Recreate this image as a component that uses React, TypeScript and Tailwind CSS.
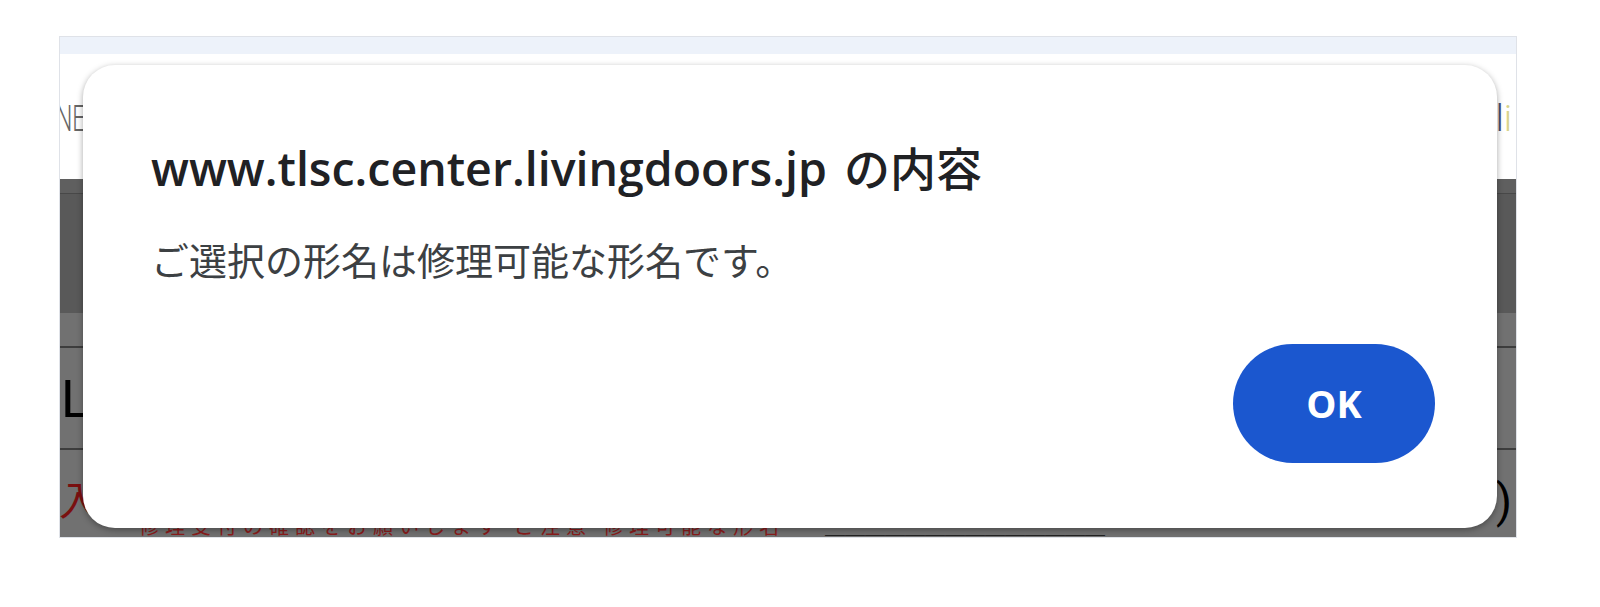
const uiFont = { fontFamily: '"Open Sans", "Noto Sans CJK JP", sans-serif' };
const pageFont = { fontFamily: 'Roboto, "Noto Sans CJK JP", sans-serif' };

function PageBehind() {
  return (
    <div className="flex h-full flex-col" style={pageFont}>
      <div className="h-[18px] bg-[#edf2fa]" />
      <div className="flex h-[129px] items-center justify-between bg-white pt-[4px]">
        <span className="-ml-[47px] origin-right scale-x-[0.62] text-[37px] font-light leading-none text-[#666]">ONE</span>
        <span className="mr-[4px] text-[37px] font-light leading-none text-[#4a4f70]">
          l<span className="text-[#d8d48a]">i</span>
        </span>
      </div>
      <div className="h-[14px] bg-[#5f5f5f]" />
      <div className="h-[2px] bg-[#484848]" />
      <div className="h-[123px] bg-[#595959]" />
      <div className="h-[34px] bg-[#717171]" />
      <div className="h-[2px] bg-[#3d3d3d]" />
      <div className="flex h-[103px] items-start bg-[#717171] pl-[1px] pt-[24px]">
        <span className="text-[53px] leading-none text-black" style={{ fontFamily: '"Liberation Sans", sans-serif' }}>
          L
        </span>
      </div>
      <div className="h-[2px] bg-[#3d3d3d]" />
      <div className="flex flex-1 items-start justify-between bg-[#717171] pt-[32px]">
        <div className="flex items-start gap-[40px]">
          <span className="-ml-[1px] text-[40px] leading-none text-[#7a1010]">入</span>
          <span className="mt-[35px] text-[20px] leading-none tracking-[6px] text-[#8a1c1c]">
            修理受付の確認をお願いします ご注意 修理可能な形名
          </span>
          <span className="mt-[35px] text-[20px] font-bold leading-none text-[#222]">
            ＿＿＿＿＿＿＿＿＿＿＿＿＿＿
          </span>
        </div>
        <span className="-mt-[4px] mr-[4px] text-[46px] leading-none text-black">)</span>
      </div>
    </div>
  );
}

function AlertDialog() {
  return (
    <div
      className="absolute left-[23px] top-[28px] flex h-[463px] w-[1414px] flex-col rounded-[32px] bg-white pb-[65px] pl-[68px] pr-[62px] pt-[80px] shadow-[0_2px_6px_rgba(0,0,0,0.35)]"
      style={uiFont}
    >
      <h1 className="text-[46.5px] font-semibold leading-none text-[#202124]">
        www.tlsc.center.livingdoors.jp{' '}
        <span className="ml-[5px] text-[46px] font-medium">の内容</span>
      </h1>
      <p className="mt-[49px] text-[38px] leading-none text-[#3c4043]">
        ご選択の形名は修理可能な形名です。
      </p>
      <div className="mt-auto flex justify-end">
        <button
          type="button"
          className="flex h-[119px] w-[202px] items-center justify-center rounded-full bg-[#1b57cf] text-[38px] font-bold text-white"
        >
          OK
        </button>
      </div>
    </div>
  );
}

export default function App() {
  return (
    <div className="h-[607px] w-[1600px] bg-white pl-[59px] pt-[36px]" style={{ fontFamily: '"Noto Sans CJK JP", sans-serif' }}>
      <div className="relative h-[502px] w-[1458px] overflow-hidden border border-[#dfe2e8]">
        <PageBehind />
        <AlertDialog />
      </div>
    </div>
  );
}
